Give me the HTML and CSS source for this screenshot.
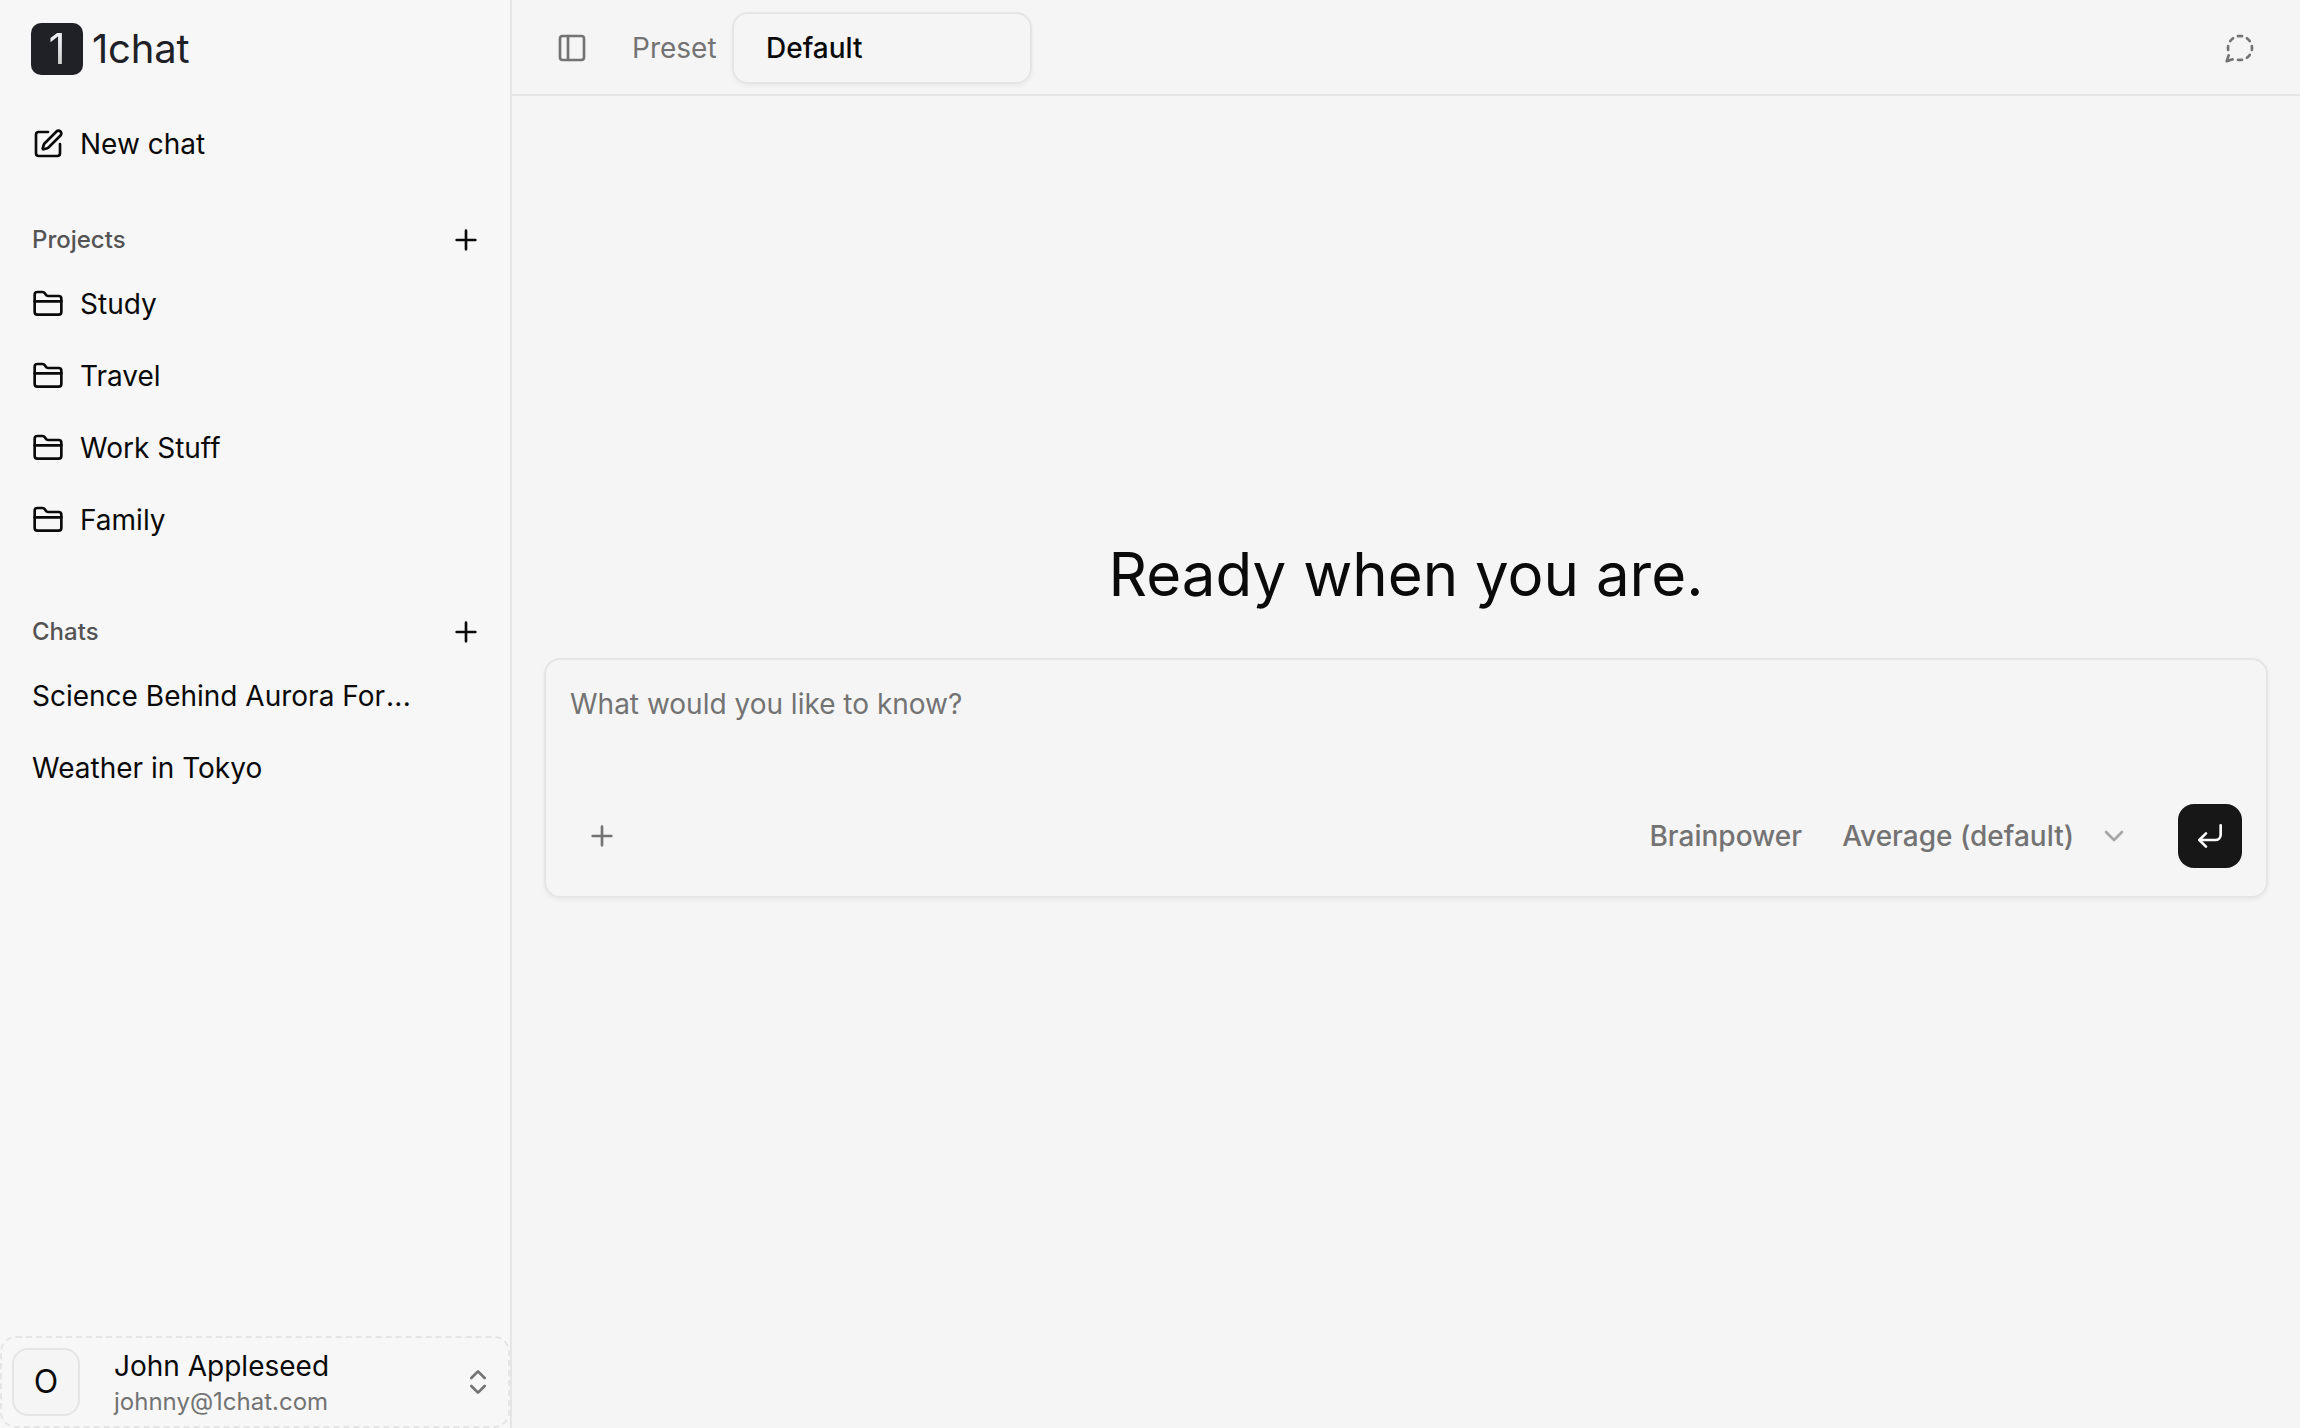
FILE: index.html
```
<!DOCTYPE html>
<html lang="en">
<head>
    <meta charset="UTF-8">
    <meta name="viewport" content="width=device-width, initial-scale=1.0">
    <title>1chat</title>
    <link rel="stylesheet" href="styles.css">
</head>
<body>
    <!-- Shared icon shapes -->
    <svg class="sprite" aria-hidden="true">
        <symbol id="folder" viewBox="0 0 24 24">
            <path d="M20 20a2 2 0 0 0 2-2V8a2 2 0 0 0-2-2h-7.9a2 2 0 0 1-1.69-.9L9.6 3.9A2 2 0 0 0 7.93 3H4a2 2 0 0 0-2 2v13a2 2 0 0 0 2 2Z"/>
            <path d="M2 10h20"/>
        </symbol>
        <symbol id="plus" viewBox="0 0 24 24">
            <path d="M5 12h14M12 5v14"/>
        </symbol>
    </svg>

    <div class="app">
        <aside class="sidebar">
            <div class="brand">
                <span class="brand-mark"><span class="brand-digit">1</span></span>
                <span class="brand-name">1chat</span>
            </div>

            <a class="nav-item new-chat">
                <svg class="icon" viewBox="0 0 24 24">
                    <path d="M12 3H5a2 2 0 0 0-2 2v14a2 2 0 0 0 2 2h14a2 2 0 0 0 2-2v-7"/>
                    <path d="M18.375 2.625a1 1 0 0 1 3 3l-9.013 9.014a2 2 0 0 1-.853.505l-2.873.84a.5.5 0 0 1-.62-.62l.84-2.873a2 2 0 0 1 .506-.852z"/>
                </svg>
                <span>New chat</span>
            </a>

            <section class="nav-group">
                <div class="nav-heading">
                    <h2>Projects</h2>
                    <svg class="icon"><use href="#plus"/></svg>
                </div>
                <a class="nav-item"><svg class="icon"><use href="#folder"/></svg><span>Study</span></a>
                <a class="nav-item"><svg class="icon"><use href="#folder"/></svg><span>Travel</span></a>
                <a class="nav-item"><svg class="icon"><use href="#folder"/></svg><span>Work Stuff</span></a>
                <a class="nav-item"><svg class="icon"><use href="#folder"/></svg><span>Family</span></a>
            </section>

            <section class="nav-group">
                <div class="nav-heading">
                    <h2>Chats</h2>
                    <svg class="icon"><use href="#plus"/></svg>
                </div>
                <a class="nav-item"><span class="chat-title">Science Behind Aurora For<span class="ellipsis">...</span></span></a>
                <a class="nav-item"><span class="chat-title">Weather in Tokyo</span></a>
            </section>

            <div class="user-card">
                <span class="avatar">O</span>
                <div class="user-info">
                    <span class="user-name">John Appleseed</span>
                    <span class="user-email">johnny@1chat.com</span>
                </div>
                <svg class="icon muted" viewBox="0 0 24 24">
                    <path d="m7 15 5 5 5-5"/>
                    <path d="m7 9 5-5 5 5"/>
                </svg>
            </div>
        </aside>

        <main class="main">
            <header class="topbar">
                <svg class="icon muted" viewBox="0 0 24 24">
                    <rect width="18" height="18" x="3" y="3" rx="2"/>
                    <path d="M9 3v18"/>
                </svg>
                <span class="preset-label">Preset</span>
                <div class="preset-select">Default</div>
                <svg class="icon muted temp-chat" viewBox="0 0 24 24">
                    <path d="M13.5 3.1c-.5 0-1-.1-1.5-.1s-1 .1-1.5.1"/>
                    <path d="M19.3 6.8a10.45 10.45 0 0 0-2.1-2.1"/>
                    <path d="M20.9 13.5c.1-.5.1-1 .1-1.5s-.1-1-.1-1.5"/>
                    <path d="M17.2 19.3a10.45 10.45 0 0 0 2.1-2.1"/>
                    <path d="M10.5 20.9c.5.1 1 .1 1.5.1s1-.1 1.5-.1"/>
                    <path d="M3.5 17.5 2 22l4.5-1.5"/>
                    <path d="M3.1 10.5c0 .5-.1 1-.1 1.5s.1 1 .1 1.5"/>
                    <path d="M6.8 4.7a10.45 10.45 0 0 0-2.1 2.1"/>
                </svg>
            </header>

            <div class="welcome">
                <h1>Ready when you are.</h1>
                <div class="composer">
                    <p class="composer-input">What would you like to know?</p>
                    <div class="composer-bar">
                        <svg class="icon muted attach"><use href="#plus"/></svg>
                        <span class="power-label">Brainpower</span>
                        <span class="power-value">Average (default)</span>
                        <svg class="icon muted chevron" viewBox="0 0 24 24"><path d="m6 9 6 6 6-6"/></svg>
                        <button class="send" aria-label="Send">
                            <svg class="icon" viewBox="0 0 24 24">
                                <path d="M20 4v7a4 4 0 0 1-4 4H4"/>
                                <path d="m9 10-5 5 5 5"/>
                            </svg>
                        </button>
                    </div>
                </div>
            </div>
        </main>
    </div>
</body>
</html>
```

FILE: styles.css
```
* {
    margin: 0;
    padding: 0;
    box-sizing: border-box;
}

:root {
    --bg: #f5f5f5;
    --sidebar-bg: #f7f7f7;
    --border: #e5e5e5;
    --text: #0a0a0a;
    --muted: #737373;
    --radius: 16px;
}

body {
    font-family: Inter, "Liberation Sans", sans-serif;
    font-size: 28px;
    line-height: 40px;
    color: var(--text);
    background: var(--bg);
}

.sprite {
    display: none;
}

.icon {
    flex: none;
    width: 32px;
    height: 32px;
    fill: none;
    stroke: currentColor;
    stroke-width: 2;
    stroke-linecap: round;
    stroke-linejoin: round;
}

.muted {
    color: var(--muted);
}

.app {
    display: flex;
    height: 100vh;
}

/* Sidebar */
.sidebar {
    display: flex;
    flex-direction: column;
    flex: none;
    width: 512px;
    background: var(--sidebar-bg);
    border-right: 2px solid var(--border);
}

.brand {
    display: flex;
    align-items: center;
    gap: 9px;
    height: 97px;
    padding-left: 31px;
    color: #202127;
}

.brand-mark {
    display: flex;
    align-items: center;
    justify-content: center;
    width: 52px;
    height: 52px;
    border-radius: 10px;
    background: #202127;
}

.brand-digit {
    font-size: 42px;
    background: linear-gradient(#ececf2 30%, #c8c8c4);
    -webkit-background-clip: text;
    background-clip: text;
    color: transparent;
}

.brand-name {
    font-size: 40px;
    letter-spacing: -0.2px;
}

.nav-item {
    display: flex;
    align-items: center;
    gap: 16px;
    height: 64px;
    margin-bottom: 8px;
    padding: 0 32px;
}

.new-chat {
    margin: 15px 0 32px;
}

.nav-group {
    margin-bottom: 40px;
}

.nav-heading {
    display: flex;
    align-items: center;
    justify-content: space-between;
    height: 64px;
    padding: 0 28px 0 32px;
}

.nav-heading h2 {
    font-size: 24px;
    font-weight: 500;
    color: #545454;
}

.chat-title {
    white-space: nowrap;
}

.ellipsis {
    margin-left: 1px;
    letter-spacing: 0.3px;
}

.user-card {
    display: flex;
    align-items: center;
    height: 92px;
    margin-top: auto;
    padding: 0 14px 0 10px;
    border: 2px dashed var(--border);
    border-radius: var(--radius);
}

.avatar {
    display: flex;
    align-items: center;
    justify-content: center;
    width: 68px;
    height: 68px;
    margin-right: 34px;
    border: 2px solid var(--border);
    border-radius: var(--radius);
    background: var(--bg);
    font-size: 32px;
}

.user-info {
    display: flex;
    flex: 1;
    flex-direction: column;
}

.user-name {
    line-height: 40px;
}

.user-email {
    font-size: 24px;
    line-height: 32px;
    color: var(--muted);
}

/* Main area */
.main {
    display: flex;
    flex: 1;
    flex-direction: column;
}

.topbar {
    display: flex;
    align-items: center;
    height: 96px;
    padding: 2px 44px 0;
    border-bottom: 2px solid var(--border);
}

.preset-label {
    width: 100px;
    margin-left: 44px;
    color: var(--muted);
}

.preset-select {
    display: flex;
    align-items: center;
    width: 300px;
    height: 72px;
    padding: 0 32px;
    border: 2px solid var(--border);
    border-radius: var(--radius);
    box-shadow: 0 2px 4px rgba(0, 0, 0, 0.05);
    font-weight: 500;
}

.temp-chat {
    margin-left: auto;
}

.welcome {
    display: flex;
    flex: 1;
    flex-direction: column;
    justify-content: center;
    padding: 0 32px 88px;
}

.welcome h1 {
    margin-bottom: 48px;
    font-size: 60px;
    font-weight: 400;
    line-height: 72px;
    text-align: center;
}

.composer {
    display: flex;
    flex-direction: column;
    justify-content: space-between;
    height: 240px;
    padding: 24px 24px 28px;
    border: 2px solid var(--border);
    border-radius: var(--radius);
    box-shadow: 0 2px 4px rgba(0, 0, 0, 0.05);
}

.composer-input {
    color: var(--muted);
}

.composer-bar {
    display: flex;
    align-items: center;
    color: var(--muted);
    font-weight: 500;
}

.attach {
    margin: 0 auto 0 16px;
}

.power-label {
    margin-right: 40px;
}

.chevron {
    margin: 0 48px 0 24px;
    opacity: 0.6;
}

.send {
    display: flex;
    align-items: center;
    justify-content: center;
    width: 64px;
    height: 64px;
    border: none;
    border-radius: var(--radius);
    background: #171717;
    color: #fafafa;
}
```
